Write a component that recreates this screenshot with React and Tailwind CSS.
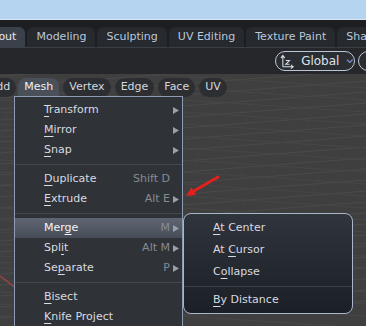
import React from 'react';

const tabs = ['Layout', 'Modeling', 'Sculpting', 'UV Editing', 'Texture Paint', 'Shading'];
const headerMenus = ['Add', 'Mesh', 'Vertex', 'Edge', 'Face', 'UV'];

const meshItems = [
  { label: 'Transform', key: 0, arrow: true },
  { label: 'Mirror', key: 0, arrow: true },
  { label: 'Snap', key: 0, arrow: true },
  { sep: true },
  { label: 'Duplicate', key: 0, shortcut: 'Shift D' },
  { label: 'Extrude', key: 0, shortcut: 'Alt E', arrow: true },
  { sep: true },
  { label: 'Merge', key: 3, shortcut: 'M', arrow: true, active: true },
  { label: 'Split', key: 3, shortcut: 'Alt M', arrow: true },
  { label: 'Separate', key: 2, shortcut: 'P', arrow: true },
  { sep: true },
  { label: 'Bisect', key: 0 },
  { label: 'Knife Project', key: 0 },
];

const mergeItems = [
  { label: 'At Center', key: 0 },
  { label: 'At Cursor', key: 3 },
  { label: 'Collapse', key: 1 },
  { sep: true },
  { label: 'By Distance', key: 0 },
];

function Label({ text, k }) {
  return (
    <span>
      {text.slice(0, k)}
      <span className="underline decoration-1 underline-offset-[3px]">{text[k]}</span>
      {text.slice(k + 1)}
    </span>
  );
}

function Arrow() {
  return (
    <svg width="6" height="7" viewBox="0 0 6 7">
      <polygon points="0,0 6,3.5 0,7" fill="#9aa0a9" />
    </svg>
  );
}

function Grid() {
  const a = Array.from({ length: 26 }, (_, i) => i);
  return (
    <svg className="absolute inset-0" width="366" height="253" viewBox="0 0 366 253">
      {a.map((i) => (
        <line key={'a' + i} x1="0" y1={-20 + i * 11} x2="366" y2={-48 + i * 11} stroke="#4b4b4b" strokeWidth="1" />
      ))}
      {a.map((i) => (
        <line key={'b' + i} x1="0" y1={-10 + i * 12} x2="366" y2={14 + i * 12} stroke="#474747" strokeWidth="1" />
      ))}
      {a.map((i) => (
        <line key={'c' + i} x1={i * 16 - 40} y1="0" x2={i * 16 - 140} y2="253" stroke="#434343" strokeWidth="1" />
      ))}
      <line x1="0" y1="202" x2="40" y2="232" stroke="#9a4444" strokeWidth="1.5" />
    </svg>
  );
}

export default function App() {
  return (
    <div className="w-[366px] h-[326px] overflow-hidden relative flex flex-col bg-[#3f3f3f] font-['DejaVu_Sans',sans-serif] text-[11px]">
      <div className="h-[19px] bg-[#b5d4f0] shrink-0" />
      <div className="h-[1px] bg-[#dbe6f2] shrink-0" />
      <div className="h-[27px] bg-[#1c1e22] pt-[7px] flex gap-[2px] shrink-0">
        {tabs.map((t, i) => (
          <div
            key={t}
            className={
              'h-[20px] px-[9px] rounded-t-[6px] flex items-center shrink-0 ' +
              (i === 0 ? 'ml-[-30px] bg-[#3b414b] text-[#e4e8ef]' : 'bg-[#26292e] text-[#bcc7d9]')
            }
          >
            {t}
          </div>
        ))}
      </div>
      <div className="h-[1px] bg-[#3a3e45] shrink-0" />
      <div className="h-[26px] bg-[#25272b] flex items-center gap-[3px] shrink-0">
        <div className="flex-1" />
        <div className="w-[80px] h-[20px] rounded-full border border-[#bdc6d5] bg-[#2a2d32] flex items-center pl-[4px] shrink-0">
          <svg width="16" height="16" viewBox="0 0 16 16" fill="none" stroke="#d8dde5" strokeWidth="1.1">
            <path d="M3 14V2.5M1 5l2-3 2 3" />
            <path d="M3 14h11M11.5 12l2.5 2-2.5 2" />
            <path d="M6 7.5h4l-4 4h4" />
          </svg>
          <span className="ml-[6px] text-[#dfe3ea] text-[12px]">Global</span>
          <svg className="ml-[7px]" width="8" height="6" viewBox="0 0 8 6" fill="none" stroke="#7d9bd6" strokeWidth="1.3">
            <path d="M1 1.5l3 3 3-3" />
          </svg>
        </div>
        <div className="w-[20px] h-[20px] rounded-full border border-[#bdc6d5] bg-[#2a2d32] shrink-0 mr-[-12px]" />
      </div>
      <div className="flex-1 relative">
        <Grid />
        <div className="relative flex gap-[2px] pt-[4px]">
          {headerMenus.map((m, i) => (
            <div
              key={m}
              className={
                'h-[19px] px-[6px] flex items-center shrink-0 text-[#d4d8de] ' +
                (i === 0 ? 'ml-[-17px] rounded-full bg-[#2c2e32] ' : '') +
                (m === 'Mesh' ? 'rounded-t-[8px] bg-[#4a505a] text-[#eef0f3] ' : '') +
                (i > 1 ? 'rounded-full bg-[#2c2e32] ml-[2px]' : '')
              }
            >
              {m}
            </div>
          ))}
        </div>
      </div>

      <div className="absolute left-[14px] top-[96px] w-[169px] h-[240px] border border-[#8e9bb4] bg-[#2f3237] pt-[3px] text-[#d8dbe0]">
        {meshItems.map((it, i) =>
          it.sep ? (
            <div key={i} className="h-[9px] flex items-center">
              <div className="h-[1px] w-full bg-[#43474e]" />
            </div>
          ) : (
            <div
              key={i}
              className={
                'h-[20px] flex items-center pl-[29px] ' +
                (it.active ? 'bg-gradient-to-b from-[#5f6673] to-[#474d57] text-[#f2f4f7]' : '')
              }
            >
              <span className="flex-1">
                <Label text={it.label} k={it.key} />
              </span>
              <span className="text-[#868b93]">{it.shortcut}</span>
              <span className="w-[12px] flex items-center justify-center">{it.arrow ? <Arrow /> : null}</span>
            </div>
          )
        )}
      </div>

      <div className="absolute left-[183px] top-[213px] w-[170px] h-[101px] rounded-[8px] border border-[#a9b5c9] bg-gradient-to-b from-[#30343c] to-[#1b1f26] pt-[3px] text-[#d8dbe0]">
        {mergeItems.map((it, i) =>
          it.sep ? (
            <div key={i} className="h-[6px] flex items-center">
              <div className="h-[1px] w-full bg-[#3d424a]" />
            </div>
          ) : (
            <div key={i} className="h-[22px] flex items-center pl-[29px]">
              <Label text={it.label} k={it.key} />
            </div>
          )
        )}
      </div>

      <svg className="absolute left-0 top-0" width="366" height="326" viewBox="0 0 366 326" pointerEvents="none">
        <line x1="218" y1="177" x2="193" y2="191.5" stroke="#e3211c" strokeWidth="3" strokeLinecap="round" />
        <polygon points="186,196 196,195 191.5,187.5" fill="#e3211c" />
      </svg>
    </div>
  );
}
